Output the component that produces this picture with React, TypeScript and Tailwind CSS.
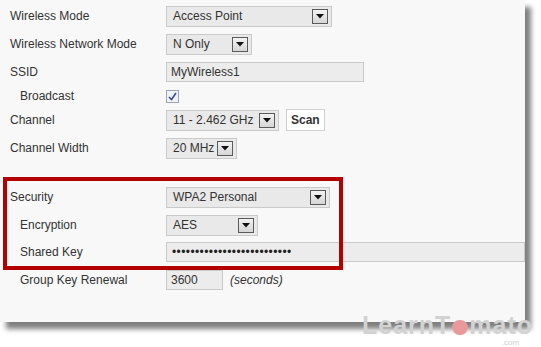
import React from "react";

const font = { fontFamily: '"Liberation Sans", Arial, sans-serif' };

const Arrow = () => (
  <span className="flex items-center justify-center w-[16px] h-[15px] border border-[#5a5a5a] bg-gradient-to-b from-[#f2f2f2] to-[#d6d6d6]">
    <svg width="8" height="5" viewBox="0 0 8 5">
      <path d="M0 0 H8 L4 4.5 Z" fill="#111" />
    </svg>
  </span>
);

const Select = ({ label, width }: { label: string; width: string }) => (
  <div className={`flex items-center justify-between h-[21px] ${width} pl-[6px] pr-[3px] border border-[#cacaca] bg-[#e9e9e9] text-[12px] text-[#333]`}>
    <span>{label}</span>
    <Arrow />
  </div>
);

const Row = ({
  label,
  indent,
  h = "h-[28px]",
  children,
}: {
  label: string;
  indent?: boolean;
  h?: string;
  children: React.ReactNode;
}) => (
  <div className={`flex items-center ${h}`}>
    <div className={`w-[166px] shrink-0 text-[12px] text-[#333] ${indent ? "pl-[20px]" : "pl-[10px]"}`}>{label}</div>
    <div className="flex items-center gap-[7px] flex-1">{children}</div>
  </div>
);

export default function App() {
  return (
    <div className="relative w-[541px] h-[347px] bg-white overflow-hidden" style={font}>
      <div className="w-[525px] h-[322px] bg-[#f8f8f8] pt-[2px] shadow-[6px_7px_5px_rgba(0,0,0,0.5)]">
        <Row label="Wireless Mode">
          <Select label="Access Point" width="w-[166px]" />
        </Row>
        <Row label="Wireless Network Mode">
          <Select label="N Only" width="w-[86px]" />
        </Row>
        <Row label="SSID">
          <div className="h-[20px] w-[198px] pl-[4px] border border-[#cacaca] bg-[#ececec] text-[12px] text-[#333] flex items-center">
            MyWireless1
          </div>
        </Row>
        <Row label="Broadcast" indent h="h-[20px]">
          <span className="flex items-center justify-center w-[13px] h-[13px] border border-[#9aa6b8] bg-[#f0f2f6]">
            <svg width="9" height="9" viewBox="0 0 9 9">
              <path d="M1 5 L3.5 7.5 L8 1" stroke="#3a4a9c" strokeWidth="1.6" fill="none" />
            </svg>
          </span>
        </Row>
        <Row label="Channel">
          <Select label="11 - 2.462 GHz" width="w-[113px]" />
          <button className="h-[22px] px-[4px] border border-[#d0d0d0] bg-white text-[12px] font-bold text-[#333]">Scan</button>
        </Row>
        <Row label="Channel Width">
          <Select label="20 MHz" width="w-[71px]" />
        </Row>
        <div className="h-[21px]" />
        <Row label="Security">
          <Select label="WPA2 Personal" width="w-[164px]" />
        </Row>
        <Row label="Encryption" indent>
          <Select label="AES" width="w-[92px]" />
        </Row>
        <Row label="Shared Key" indent h="h-[26px]">
          <div className="h-[20px] flex-1 pl-[5px] border border-[#cacaca] bg-[#ececec] text-[12px] tracking-[0.4px] text-[#222] flex items-center">
            ••••••••••••••••••••••••••
          </div>
        </Row>
        <div className="h-px" />
        <Row label="Group Key Renewal" indent>
          <div className="h-[20px] w-[57px] pl-[4px] border border-[#cacaca] bg-[#ececec] text-[12px] text-[#333] flex items-center">
            3600
          </div>
          <span className="italic text-[12px] text-[#333]">(seconds)</span>
        </Row>
      </div>

      {/* annotation box */}
      <div className="absolute left-[3px] top-[177px] w-[340px] h-[93px] border-[4px] border-[#b30000]" />

      {/* watermark */}
      <div className="absolute left-[362px] top-[313px] flex flex-col items-end">
        <div className="flex items-center h-[24px] text-[25px] font-bold text-[#d2d2d2] leading-[24px] tracking-[1px]">
          <span>LearnT</span>
          <span className="inline-block w-[16px] h-[15px] mt-[5px] rounded-full bg-[#e89a9a] mx-[1px]" />
          <span>mato</span>
        </div>
        <div className="mt-[2px] mr-[14px] text-[8px] leading-[8px] text-[#cfcfcf]">.com</div>
      </div>
    </div>
  );
}
